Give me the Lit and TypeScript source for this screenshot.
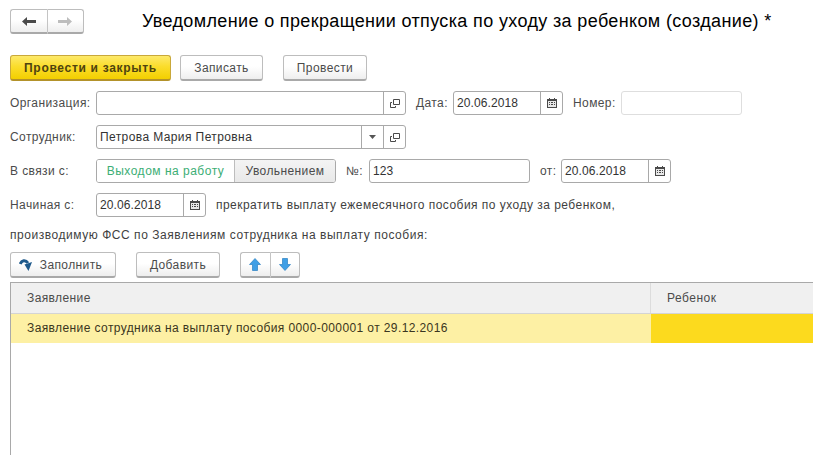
import { LitElement, html, css, svg } from "lit";
import { customElement } from "lit/decorators.js";

const copyIcon = svg`<svg width="10" height="9" viewBox="0 0 10 9"><path d="M3.5.5h6v5h-6z" fill="none" stroke="#4a4a4a"/><path d="M2 3.5H.5v5h5V7" fill="none" stroke="#4a4a4a"/></svg>`;
const calIcon = svg`<svg width="10" height="10" viewBox="0 0 10 10"><path d="M0 1h10v9H0z" fill="#4a4a4a"/><path d="M2 0h1v2H2zM7 0h1v2H7z" fill="#4a4a4a"/><path d="M1 3h8v6H1z" fill="#e8e8e8"/><path d="M2 4h1v1H2zM4 4h2v1H4zM7 4h1v1H7zM2 6h1v1H2zM4 6h2v1H4zM7 6h1v1H7z" fill="#4a4a4a"/></svg>`;
const arrow = (c: string, flip = false) => svg`<svg width="14" height="9" viewBox="0 0 14 9" style=${flip ? "transform:scaleX(-1)" : ""}><path d="M0 4.5 5 0V3H14V6H5V9Z" fill=${c}/></svg>`;
const vertArrow = (down = false) => svg`<svg width="12" height="13" viewBox="0 0 12 13" style=${down ? "transform:scaleY(-1)" : ""}><path d="M6 .5 11.5 6.5H8.5V12.5H3.5V6.5H.5Z" fill="#3f9fe6" stroke="#2b7fc0" stroke-width=".7"/></svg>`;
const fillIcon = svg`<svg width="13" height="13" viewBox="0 0 13 13"><path d="M1.2 6C2.5 2.2 6.5 1.5 9 5" fill="none" stroke="#1f5a8c" stroke-width="3"/><path d="M13 4 5.5 6.5 9.5 13Z" fill="#1f5a8c"/></svg>`;

@customElement("app-root")
export class AppRoot extends LitElement {
  static styles = css`
    :host {
      display: block;
      width: 813px;
      height: 455px;
      overflow: hidden;
      background: #fff;
      font-family: "Liberation Sans", Arial, sans-serif;
      font-size: 12px;
      letter-spacing: 0.4px;
      color: #4b4b4b;
    }
    .page { display: flex; flex-direction: column; padding: 9px 0 0 10px; height: 446px; box-sizing: border-box; }
    .head { display: flex; align-items: center; height: 25px; }
    .nav { display: flex; width: 74px; height: 25px; box-sizing: border-box; flex: none; }
    .title { margin-left: 58px; font-size: 18px; color: #000; white-space: nowrap; letter-spacing: 0.36px; }
    .btn {
      box-sizing: border-box; height: 26px; display: flex; align-items: center; justify-content: center;
      border: 1px solid #bdbdbd; border-bottom: 2px solid #a9a9a9; border-radius: 3px;
      background: linear-gradient(#fff, #fff 45%, #eeeeee); color: #4b4b4b; white-space: nowrap;
    }
    .nav .btn { height: 25px; }
    .cmd { display: flex; margin-top: 21px; height: 26px; }
    .primary {
      width: 161px; font-weight: bold; letter-spacing: 0.7px; color: #4e4310; border-color: #c9a83a; border-bottom-color: #b3922a;
      background: linear-gradient(#fde96a, #fbdd2c 45%, #f3cf00);
    }
    .rec { width: 83px; margin-left: 9px; }
    .post { width: 84px; margin-left: 20px; }
    .row { display: flex; align-items: center; height: 24px; margin-top: 10px; }
    .lbl { white-space: nowrap; flex: none; }
    .l1 { width: 86px; }
    .gap { margin-left: 10px; }
    .date-l { width: 37px; }
    .num-l { width: 48px; }
    .no-l { width: 23px; }
    .from-l { width: 21px; }
    .long { color: #3f3f3f; letter-spacing: 0.47px; }
    .field {
      box-sizing: border-box; height: 24px; flex: none; display: flex; align-items: stretch;
      border: 1px solid #a9a9a9; border-radius: 3px; background: #fff; color: #333;
    }
    .w310 { width: 310px; }
    .w110 { width: 110px; }
    .w121 { width: 121px; }
    .w161 { width: 161px; }
    .field .v { flex: 1; padding: 0 3px; line-height: 22px; white-space: nowrap; overflow: hidden; }
    .field .v.d { letter-spacing: 0.1px; }
    .field .b { flex: none; width: 21px; border-left: 1px solid #a9a9a9; display: flex; align-items: center; justify-content: center; }
    .field.off { border-color: #dedede; }
    .tog { display: flex; height: 24px; width: 240px; box-sizing: border-box; border: 1px solid #a9a9a9; border-radius: 3px; flex: none; overflow: hidden; }
    .tog .on { width: 137px; flex: none; display: flex; align-items: center; justify-content: center; color: #3cae75; background: #fff; letter-spacing: 0.5px; }
    .tog .off { flex: 1; display: flex; align-items: center; justify-content: center; border-left: 1px solid #bdbdbd; background: linear-gradient(#f4f4f4, #e9e9e9); }
    .note { margin-top: 11px; height: 14px; line-height: 14px; white-space: nowrap; color: #3f3f3f; letter-spacing: 0.54px; }
    .tools { display: flex; margin-top: 10px; height: 26px; }
    .fill { width: 106px; gap: 8px; padding-right: 5px; }
    .add { width: 84px; margin-left: 20px; }
    .updown { display: flex; margin-left: 20px; width: 60px; height: 26px; box-sizing: border-box; }
    .seg { flex: 1; }
    .seg.l { border-radius: 3px 0 0 3px; border-right: 1px solid #c4c4c4; }
    .seg.r { border-radius: 0 3px 3px 0; border-left: 0; }
    .table { margin-top: 4px; flex: 1; border-top: 1px solid #a9a9a9; border-left: 1px solid #a9a9a9; display: flex; flex-direction: column; min-height: 0; margin-bottom: -9px; }
    .thead { display: flex; height: 31px; background: #f0f0f0; border-bottom: 1px solid #d4d4d4; flex: none; box-sizing: border-box; }
    .col1 { width: 640px; flex: none; box-sizing: border-box; padding-left: 16px; }
    .thead .col1 { border-right: 1px solid #dcdcdc; line-height: 30px; }
    .thead .col2 { flex: 1; padding-left: 16px; line-height: 30px; letter-spacing: 0.5px; }
    .tr { display: flex; height: 29px; flex: none; }
    .tr .col1 { background: #fdf0a4; color: #3a3520; line-height: 28px; }
    .tr .col2 { flex: 1; background: #fcda1e; }
  `;

  render() {
    return html`<div class="page">
      <div class="head">
        <div class="nav">
          <div class="btn seg l">${arrow("#4a4a4a")}</div>
          <div class="btn seg r">${arrow("#bdbdbd", true)}</div>
        </div>
        <div class="title">Уведомление о прекращении отпуска по уходу за ребенком (создание) *</div>
      </div>
      <div class="cmd">
        <div class="btn primary">Провести и закрыть</div>
        <div class="btn rec">Записать</div>
        <div class="btn post">Провести</div>
      </div>
      <div class="row">
        <span class="lbl l1">Организация:</span>
        <div class="field w310"><div class="v"></div><div class="b">${copyIcon}</div></div>
        <span class="lbl gap date-l">Дата:</span>
        <div class="field w110"><div class="v d">20.06.2018</div><div class="b">${calIcon}</div></div>
        <span class="lbl gap num-l">Номер:</span>
        <div class="field off w121"></div>
      </div>
      <div class="row">
        <span class="lbl l1">Сотрудник:</span>
        <div class="field w310"><div class="v">Петрова Мария Петровна</div>
          <div class="b"><svg width="7" height="4"><path d="M0 0h7L3.5 4z" fill="#555"/></svg></div>
          <div class="b">${copyIcon}</div></div>
      </div>
      <div class="row">
        <span class="lbl l1">В связи с:</span>
        <div class="tog"><div class="on">Выходом на работу</div><div class="off">Увольнением</div></div>
        <span class="lbl gap no-l">№:</span>
        <div class="field w161"><div class="v d">123</div></div>
        <span class="lbl gap from-l">от:</span>
        <div class="field w110"><div class="v d">20.06.2018</div><div class="b">${calIcon}</div></div>
      </div>
      <div class="row">
        <span class="lbl l1">Начиная с:</span>
        <div class="field w110"><div class="v d">20.06.2018</div><div class="b">${calIcon}</div></div>
        <span class="lbl gap long">прекратить выплату ежемесячного пособия по уходу за ребенком,</span>
      </div>
      <div class="note">производимую ФСС по Заявлениям сотрудника на выплату пособия:</div>
      <div class="tools">
        <div class="btn fill">${fillIcon}<span>Заполнить</span></div>
        <div class="btn add">Добавить</div>
        <div class="updown">
          <div class="btn seg l">${vertArrow()}</div>
          <div class="btn seg r">${vertArrow(true)}</div>
        </div>
      </div>
      <div class="table">
        <div class="thead"><div class="col1">Заявление</div><div class="col2">Ребенок</div></div>
        <div class="tr"><div class="col1">Заявление сотрудника на выплату пособия 0000-000001 от 29.12.2016</div><div class="col2"></div></div>
      </div>
    </div>`;
  }
}
